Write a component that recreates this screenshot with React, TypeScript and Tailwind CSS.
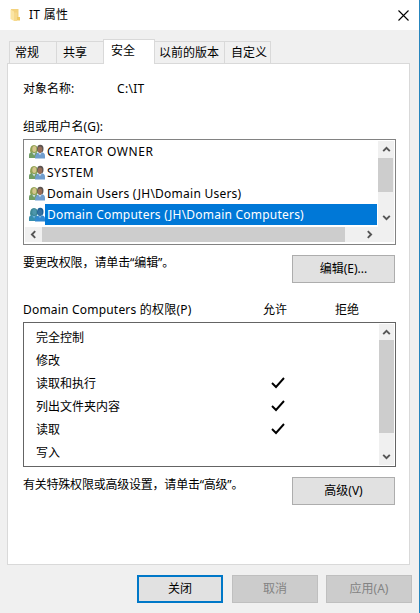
import type { ReactNode } from "react";

const FONT = "font-['Noto_Sans','Noto_Sans_CJK_SC',sans-serif]";

function FolderIcon() {
  return (
    <svg className="ml-[10px] h-[14px] w-[11px]" viewBox="0 0 11 14">
      <path d="M1 1h7.500v9.500h-7.500z" fill="#f3d27e" />
      <path d="M0.500 1.500l3.500 2v9.500l-3.500-2z" fill="#fbe5a3" />
      <path d="M4 4.500h3v8.500h-3z" fill="#f6d98d" />
      <path d="M7 9h3v3.500h-3z" fill="#efc964" />
    </svg>
  );
}

function UsersIcon({ selected = false }: { selected?: boolean }) {
  const c = selected
    ? { hairA: "#3c8795", faceA: "#4d96ac", bodyA: "#368eac", hairB: "#1d5f96", faceB: "#3470a0", bodyB: "#3187d0", collar: "#68afe0" }
    : { hairA: "#91a254", faceA: "#d5c58d", bodyA: "#719d64", hairB: "#5c5450", faceB: "#986d58", bodyB: "#6f9dce", collar: "#c9dceb" };
  return (
    <svg className="h-4 w-4 shrink-0" viewBox="0 0 16 16">
      <path d="M1 7q0-6 4-6 4 0 4 6l-2 2H2z" fill={c.hairA} />
      <ellipse cx="5.300" cy="5" rx="2" ry="3" fill={c.faceA} />
      <path d="M0 14v-3q0-2.500 3-3l2 2 2-2q3 1 3 6z" fill={c.bodyA} />
      <path d="M3 8.500l2.200 3 1.500-3-1.500.8z" fill={c.collar} />
      <ellipse cx="11.300" cy="4.700" rx="3.200" ry="4" fill={c.hairB} />
      <ellipse cx="11" cy="5.800" rx="2.200" ry="3.300" fill={c.faceB} />
      <path d="M6 14.500q0-5 3.500-6l1.500 1.500 2-1.700q3 .7 3 3.700v2.500z" fill={c.bodyB} />
      <path d="M9 8.500l2 2.800 2-3-2 1.200z" fill={c.collar} />
    </svg>
  );
}

const turns = { up: "rotate-0", down: "rotate-180", left: "-rotate-90", right: "rotate-90" };

function Arrow({ dir }: { dir: keyof typeof turns }) {
  return (
    <svg className={`h-[9px] w-[9px] ${turns[dir]}`} viewBox="0 0 9 9">
      <path d="M1.200 6.200L4.500 2.900l3.300 3.300" fill="none" stroke="#555" strokeWidth="1.900" />
    </svg>
  );
}

function Check() {
  return (
    <svg className="-mt-px h-[12px] w-[14px]" viewBox="0 0 14 12">
      <path d="M1 6l4 4L13 1" fill="none" stroke="#000" strokeWidth="1.900" />
    </svg>
  );
}

function Tab({ width, children }: { width: string; children: ReactNode }) {
  return (
    <div className={`flex h-[22px] shrink-0 items-center border-t border-[#d9d9d9] bg-[#f0f0f0] ${width}`}>
      {children}
    </div>
  );
}

const buttonStyles = {
  normal: "w-[103px] border border-[#adadad] bg-[#e1e1e1]",
  primary: "w-[86px] border-2 border-[#0078c8] bg-[#e1e1e1]",
  disabled: "w-[86px] border border-[#bfbfbf] bg-[#cccccc] text-[#838383]",
};

function Button({ children, kind = "normal" }: { children: ReactNode; kind?: keyof typeof buttonStyles }) {
  return (
    <button className={`flex h-7 shrink-0 items-center justify-center ${buttonStyles[kind]}`}>
      {children}
    </button>
  );
}

const users = [
  { name: "CREATOR OWNER", track: "tracking-[0.620px]" },
  { name: "SYSTEM", track: "tracking-[0.500px]" },
  { name: "Domain Users (JH\\Domain Users)", track: "tracking-[0.240px]" },
  { name: "Domain Computers (JH\\Domain Computers)", track: "tracking-[0.220px]", selected: true },
];

const permissions = [
  { name: "完全控制", allow: false },
  { name: "修改", allow: false },
  { name: "读取和执行", allow: true },
  { name: "列出文件夹内容", allow: true },
  { name: "读取", allow: true },
  { name: "写入", allow: false },
];

export default function App() {
  return (
    <div className={`h-[613px] w-[420px] overflow-hidden border-r border-[#2585bd] bg-[#f0f0f0] text-[12px] leading-4 whitespace-nowrap text-black ${FONT}`}>
      <header className="flex h-[30px] items-center bg-white">
        <FolderIcon />
        <span className="ml-[8px] tracking-[0.300px]">IT 属性</span>
        <svg className="mr-[10px] ml-auto h-[11px] w-[11px]" viewBox="0 0 11 11">
          <path d="M.5.5l10 10M10.500.5l-10 10" fill="none" stroke="#000" strokeWidth="1.100" />
        </svg>
      </header>

      <nav className="flex h-[33px] items-end pl-[9px]">
        <Tab width="w-12 border-x pl-[5px]">常规</Tab>
        <Tab width="w-[46px] pl-[6px]">共享</Tab>
        <div className="z-10 -mb-px flex h-[25px] w-[52px] shrink-0 border border-b-0 border-[#d9d9d9] bg-white pt-[3px] pl-[7px]">安全</div>
        <Tab width="w-[70px] border-r pl-[4px]">以前的版本</Tab>
        <Tab width="w-[46px] border-r pl-[6px]">自定义</Tab>
      </nav>

      <main className="ml-[7px] h-[502px] w-[403px] border border-[#d9d9d9] bg-white pl-[15px]">
        <div className="mt-[17px] flex">
          <span className="w-[94px]">对象名称:</span>
          <span className="tracking-[0.300px]">C:\IT</span>
        </div>
        <div className="mt-[22px] tracking-[0.100px]">组或用户名(G):</div>

        <section className="mt-[4px] h-[106px] w-[373px] border border-[#828282] p-px">
          <div className="flex h-[86px]">
            <ul className="w-[352px] pl-[4px]">
              {users.map((u) => (
                <li key={u.name} className="flex h-[21px] items-center">
                  <UsersIcon selected={u.selected} />
                  <span className={`flex h-[21px] flex-1 items-center pl-[2px] ${u.track} ${u.selected ? "bg-[#0078d7] text-white" : ""}`}>
                    {u.name}
                  </span>
                </li>
              ))}
            </ul>
            <div className="ml-px flex h-[86px] w-4 flex-col items-center bg-[#f0f0f0]">
              <div className="flex h-[17px] items-center"><Arrow dir="up" /></div>
              <div className="h-[34px] w-[15px] self-start bg-[#cdcdcd]" />
              <div className="mt-auto mb-[5px]"><Arrow dir="down" /></div>
            </div>
          </div>
          <div className="flex h-[15px] items-center bg-[#f0f0f0]">
            <div className="flex w-[17px] justify-center"><Arrow dir="left" /></div>
            <div className="h-[15px] w-[303px] bg-[#cdcdcd]" />
            <div className="ml-[20px]"><Arrow dir="right" /></div>
          </div>
        </section>

        <div className="mt-[10px] flex w-[372px] justify-between">
          <span className="tracking-[-0.100px]">要更改权限，请单击“编辑”。</span>
          <Button>编辑(E)...</Button>
        </div>

        <div className="mt-[19px] flex">
          <span className="w-[240px] tracking-[0.200px]">Domain Computers 的权限(P)</span>
          <span className="w-[72px]">允许</span>
          <span>拒绝</span>
        </div>

        <section className="mt-[4px] flex h-[145px] w-[373px] border border-[#646464] p-px">
          <ul className="w-[354px] pt-[2px] pl-[11px]">
            {permissions.map((p) => (
              <li key={p.name} className="flex h-[23px] items-center">
                <span className="w-[235px]">{p.name}</span>
                {p.allow && <Check />}
              </li>
            ))}
          </ul>
          <div className="flex h-[141px] w-[15px] flex-col items-center bg-[#f0f0f0]">
            <div className="flex h-4 items-center"><Arrow dir="up" /></div>
            <div className="h-[93px] w-[15px] bg-[#cdcdcd]" />
            <div className="mt-auto mb-[4px]"><Arrow dir="down" /></div>
          </div>
        </section>

        <div className="mt-[10px] flex w-[372px] justify-between">
          <span className="tracking-[-0.220px]">有关特殊权限或高级设置，请单击“高级”。</span>
          <Button>高级(V)</Button>
        </div>
      </main>

      <footer className="mt-[10px] flex gap-x-[9px] pl-[137px]">
        <Button kind="primary">关闭</Button>
        <Button kind="disabled">取消</Button>
        <div className="-ml-px">
          <Button kind="disabled">应用(A)</Button>
        </div>
      </footer>
    </div>
  );
}
